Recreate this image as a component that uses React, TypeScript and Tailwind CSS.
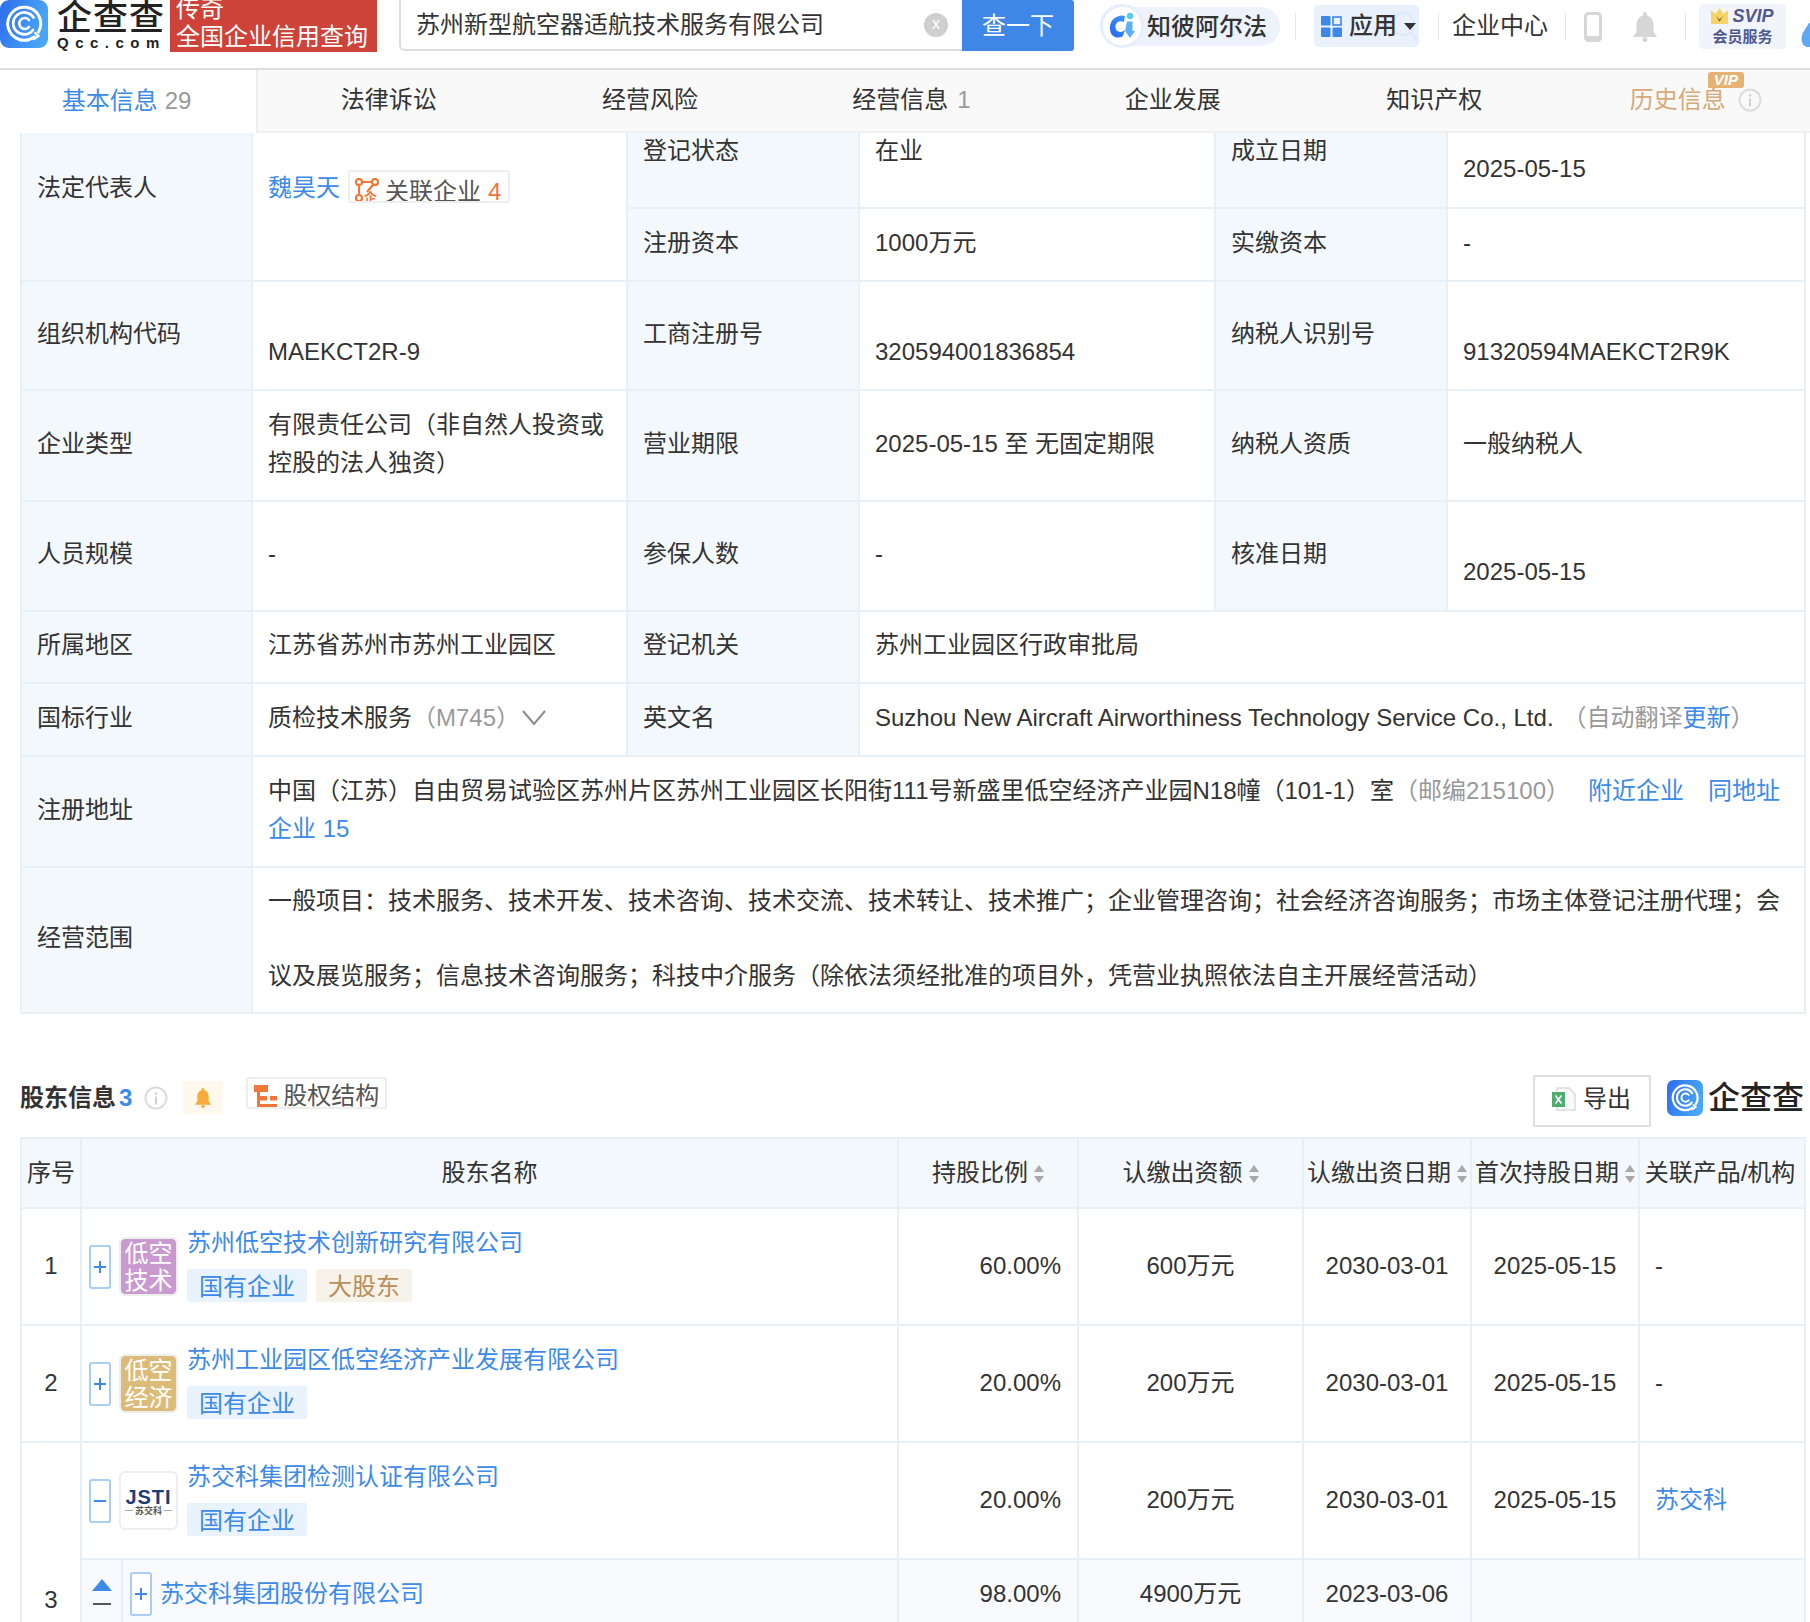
import React from "react";

const FONT = "font-['Liberation_Sans','Noto_Sans_CJK_SC',sans-serif]";
const BLUE = "text-[#3d8ae8]";

function QccIcon({ size, id }: { size: number; id: string }) {
  return (
    <svg width={size} height={size} viewBox="0 0 48 48" className="shrink-0 block">
      <defs>
        <linearGradient id={id} x1="0" y1="0" x2="1" y2="0.3">
          <stop offset="0" stopColor="#2e6cec" />
          <stop offset="1" stopColor="#48a6f6" />
        </linearGradient>
      </defs>
      <rect x="0" y="0" width="48" height="48" rx="9" fill={`url(#${id})`} />
      <path d="M34 37 A16.5 16.5 0 1 1 38.5 32" fill="none" stroke="#fff" strokeWidth="3" strokeLinecap="round" />
      <path d="M33 39.5 L38.5 36 L34.5 32.5" fill="none" stroke="#fff" strokeWidth="2.6" strokeLinejoin="round" />
      <path d="M33 30 A11 11 0 1 1 33.5 17.5" fill="none" stroke="#fff" strokeWidth="2.8" strokeLinecap="round" />
      <path d="M29 27 A5.5 5.5 0 1 1 29 20" fill="none" stroke="#fff" strokeWidth="2.6" strokeLinecap="round" />
    </svg>
  );
}

function Info({ cls }: { cls: string }) {
  return (
    <svg width="24" height="24" viewBox="0 0 24 24" className={cls}>
      <circle cx="12" cy="12" r="10.5" fill="none" stroke="#dcdcdc" strokeWidth="2" />
      <circle cx="12" cy="7.5" r="1.3" fill="#d0d0d0" />
      <rect x="11" y="10.5" width="2" height="8" fill="#d0d0d0" />
    </svg>
  );
}

function Sort() {
  return (
    <svg width="10" height="18" viewBox="0 0 10 18" className="inline-block ml-[6px] align-[-2px]">
      <path d="M5 0 L10 7 H0 Z M5 18 L0 11 H10 Z" fill="#a9a9a9" />
    </svg>
  );
}

function Toggle({ minus }: { minus?: boolean }) {
  return (
    <span className="w-[22px] h-[44px] shrink-0 rounded-[3px] border-2 border-[#a9cdf5] bg-white flex items-center justify-center">
      <svg width="12" height="12" viewBox="0 0 12 12">
        {!minus && <rect x="5" y="0" width="2" height="12" fill="#3d8ae8" />}
        <rect x="0" y="5" width="12" height="2" fill="#3d8ae8" />
      </svg>
    </span>
  );
}

function Tag({ gold, children }: { gold?: boolean; children: React.ReactNode }) {
  return (
    <span
      className={`inline-flex items-center h-[33px] px-[12px] pt-[2px] rounded-[2px] text-[24px] ${
        gold ? "bg-[#f7f2ea] text-[#b78f58]" : "bg-[#e9f3fd] text-[#3d8ae8]"
      }`}
    >
      {children}
    </span>
  );
}

function Logo({ a, b, bg }: { a: string; b: string; bg: string }) {
  return (
    <span className="w-[59px] h-[59px] shrink-0 rounded-[6px] border-2 border-[#eeeeee] overflow-hidden bg-white">
      <span className={`flex flex-col items-center justify-center w-full h-full rounded-[4px] text-white text-[24px] leading-[27px] ${bg}`}>
        <span>{a}</span>
        <span>{b}</span>
      </span>
    </span>
  );
}

function JstiLogo() {
  return (
    <span className="w-[59px] h-[59px] shrink-0 rounded-[6px] border-2 border-[#eeeeee] bg-white flex flex-col items-center justify-center pt-[2px]">
      <span className="text-[20px] leading-[18px] font-black text-[#1d3c78] tracking-[1px] font-['Liberation_Sans',sans-serif]">JSTI</span>
      <span className="flex items-center gap-[2px] text-[9px] leading-[10px] font-bold text-[#555]">
        <span className="w-[8px] h-px bg-[#aaa]" />苏交科<span className="w-[8px] h-px bg-[#aaa]" />
      </span>
    </span>
  );
}

const TD = "border-2 border-[#e8f0f7] align-middle";
const LB = `${TD} bg-[#f3f8fc] px-[15px] pb-[4px] font-normal text-left`;
const VL = `${TD} bg-white px-[15px] pb-[4px]`;
const LOW = "pt-[36px]";
const CELL = `${TD} pb-[2px]`;

function Shareholder({
  toggleMinus,
  logo,
  name,
  tags,
}: {
  toggleMinus?: boolean;
  logo: React.ReactNode;
  name: string;
  tags: React.ReactNode;
}) {
  return (
    <div className="flex items-center pl-[7px]">
      <Toggle minus={toggleMinus} />
      <span className="ml-[8px] mr-[9px] flex">{logo}</span>
      <div className="flex flex-col gap-[8px] -mt-[6px]">
        <a className={`${BLUE} leading-[36px]`}>{name}</a>
        <div className="flex gap-[9px]">{tags}</div>
      </div>
    </div>
  );
}

export default function App() {
  return (
    <div className={`relative w-[1810px] h-[1622px] overflow-hidden bg-white text-[#333333] text-[24px] ${FONT}`}>
      {/* top bar */}
      <header className="flex items-start h-[68px] whitespace-nowrap [&>*]:shrink-0">
        <QccIcon size={48} id="q1" />
        <div className="w-[122px] pl-[9px] flex flex-col">
          <span className="text-[35px] leading-[36px] tracking-[1px] text-[#222] font-medium">企查查</span>
          <span className="text-[15px] leading-[14px] tracking-[6.5px] font-semibold text-[#222]">Qcc.com</span>
        </div>
        <div className="w-[207px] h-[52px] overflow-hidden bg-[#cd4239] text-white pl-[6px] flex flex-col justify-end leading-[28px]">
          <span className="shrink-0">传奇</span>
          <span className="shrink-0 mb-[1px]">全国企业信用查询</span>
        </div>
        <div className="ml-[22px] w-[563px] h-[51px] border-2 border-t-0 border-r-0 border-[#dddddd] rounded-bl-[6px] flex items-center pl-[15px] pr-[14px] justify-between">
          <span>苏州新型航空器适航技术服务有限公司</span>
          <span className="w-[24px] h-[24px] rounded-full bg-[#cfcfcf] text-white text-[16px] leading-[22px] text-center">x</span>
        </div>
        <div className="w-[112px] h-[51px] bg-[#3f87e6] text-white rounded-r-[3px] flex items-center justify-center">查一下</div>
        <div className="ml-[26px] mt-[7px] w-[180px] h-[39px] rounded-full bg-[#edf2fc] relative flex items-center pl-[47px] font-medium">
          <span className="absolute left-0 -top-[3px] w-[44px] h-[44px] rounded-full bg-white border-[3px] border-[#e6eefb] flex items-center justify-center">
            <svg width="30" height="30" viewBox="0 0 30 30">
              <defs>
                <linearGradient id="ci" x1="0" y1="1" x2="1" y2="0">
                  <stop offset="0" stopColor="#2b63ee" />
                  <stop offset="1" stopColor="#3b9af5" />
                </linearGradient>
              </defs>
              <path d="M18 5 A12 12 0 0 0 3 18 C3 25 10 29 16 25 L18 19 C13 23 8.5 20 8.5 16 C8.5 11 13 9 17 11 Z" fill="url(#ci)" />
              <circle cx="23" cy="5" r="3.2" fill="#55cdf2" />
              <path d="M20 10.5 H25.5 V20 L28 20 L23 27 L18 20 Z" fill="#5db0f5" />
            </svg>
          </span>
          知彼阿尔法
        </div>
        <span className="ml-[15px] mt-[13px] w-px h-[27px] bg-[#e6e6e6]" />
        <div className="ml-[18px] mt-[5px] w-[105px] h-[42px] rounded-[4px] bg-[#e9f1fd] relative overflow-hidden flex items-center pl-[7px] font-medium">
          <svg width="28" height="32" viewBox="0 0 28 32" className="absolute left-[76px] top-[6px]">
            <circle cx="13" cy="13" r="11" fill="none" stroke="#dfeafb" strokeWidth="2.5" />
            <path d="M21 22 L27 30" stroke="#dfeafb" strokeWidth="3" />
          </svg>
          <svg width="21" height="21" viewBox="0 0 21 21" className="mr-[7px] relative">
            <rect x="0" y="0" width="9.5" height="9.5" rx="1" fill="#3f87e6" />
            <rect x="12" y="1" width="8" height="8" fill="none" stroke="#3f87e6" strokeWidth="1.6" />
            <rect x="0" y="11.5" width="9.5" height="9.5" rx="1" fill="#3f87e6" />
            <rect x="11.5" y="11.5" width="9.5" height="9.5" rx="1" fill="#3f87e6" />
          </svg>
          <span className="relative">应用</span>
          <svg width="12" height="7" viewBox="0 0 12 7" className="ml-[7px] relative">
            <path d="M0 0 H12 L6 7 Z" fill="#333" />
          </svg>
        </div>
        <span className="ml-[19px] mt-[13px] w-px h-[27px] bg-[#e6e6e6]" />
        <span className="ml-[13px] mt-[7px] leading-[38px]">企业中心</span>
        <span className="ml-[17px] mt-[13px] w-px h-[27px] bg-[#e6e6e6]" />
        <svg width="18" height="30" viewBox="0 0 18 30" className="ml-[18px] mt-[12px]">
          <rect x="1.5" y="1.5" width="15" height="27" rx="3" fill="none" stroke="#d6d6d6" strokeWidth="3" />
          <rect x="2" y="24" width="14" height="4" fill="#d6d6d6" />
        </svg>
        <svg width="24" height="30" viewBox="0 0 24 30" className="ml-[31px] mt-[12px]">
          <path d="M12 0 a2 2 0 0 1 2 2 v1.5 C19 5 20.5 9 20.5 14 V20 L24 25 H0 L3.5 20 V14 C3.5 9 5 5 10 3.5 V2 a2 2 0 0 1 2 -2 Z" fill="#d6d6d6" />
          <circle cx="12" cy="27.5" r="2.5" fill="#d6d6d6" />
        </svg>
        <span className="ml-[28px] mt-[13px] w-px h-[27px] bg-[#e6e6e6]" />
        <div className="ml-[13px] mt-[4px] w-[87px] h-[45px] rounded-[4px] bg-[#f2f4fc] text-[#50598f] flex flex-col items-center font-bold">
          <span className="flex items-center gap-[4px] h-[24px] text-[18px] italic font-['Liberation_Sans',sans-serif] font-black">
            <svg width="17" height="16" viewBox="0 0 15 14">
              <path d="M0 2 L4 5 L7.5 0 L11 5 L15 2 V14 H0 Z" fill="#f6d568" />
              <path d="M4.5 7 L7.5 10 L10.5 7 L7.5 12 Z" fill="#7a5b1f" />
            </svg>
            SVIP
          </span>
          <span className="text-[15px] leading-[18px]">会员服务</span>
        </div>
        <svg width="10" height="24" viewBox="0 0 10 24" className="ml-[15px] mt-[23px]">
          <path d="M8 0 L10 0 V24 H6 C0 22 -1 14 3 8 Z" fill="#5fa8f6" />
        </svg>
      </header>
      <div className="h-[2px] bg-[#dedede]" />

      {/* tabs */}
      <nav className="flex h-[63px] pb-0 bg-[#f9f9f9] border-b-2 border-[#f0f0f0] whitespace-nowrap [&>*]:pb-[2px]">
        <div className="w-[258px] shrink-0 bg-white border-r-2 border-[#eeeeee] -mb-[2px] pr-[3px] flex items-center justify-center">
          <span className={BLUE}>基本信息</span>
          <span className="ml-[7px] text-[#999]">29</span>
        </div>
        <div className="w-[261.4px] shrink-0 flex items-center justify-center">法律诉讼</div>
        <div className="w-[261.4px] shrink-0 flex items-center justify-center">经营风险</div>
        <div className="w-[261.4px] shrink-0 flex items-center justify-center">
          经营信息<span className="ml-[9px] text-[#999]">1</span>
        </div>
        <div className="w-[261.4px] shrink-0 flex items-center justify-center">企业发展</div>
        <div className="w-[261.4px] shrink-0 flex items-center justify-center">知识产权</div>
        <div className="w-[261.4px] shrink-0 flex items-center justify-center relative text-[#d7a978]">
          历史信息
          <Info cls="ml-[12px]" />
          <span className="absolute left-[143px] top-[2px] w-[36px] h-[16px] rounded-[3px] rounded-bl-none bg-[#e6b274] text-white text-[15px] leading-[16px] font-black italic text-center font-['Liberation_Sans',sans-serif]">VIP</span>
        </div>
      </nav>

      {/* company info */}
      <section className="h-[882px] overflow-hidden pl-[20px]">
        <table className="-mt-[36px] w-[1784px] table-fixed border-collapse leading-[38px]">
          <colgroup>
            <col className="w-[231px]" />
            <col className="w-[375px]" />
            <col className="w-[232px]" />
            <col className="w-[356px]" />
            <col className="w-[232px]" />
            <col className="w-[358px]" />
          </colgroup>
          <tbody>
            <tr className="h-[110px]">
              <th rowSpan={2} className={LB}>法定代表人</th>
              <td rowSpan={2} className={VL}>
                <div className="flex items-start">
                  <a className={BLUE}>魏昊天</a>
                  <span className="ml-[8px] mt-[1px] h-[33px] overflow-hidden border-2 border-[#eeeeee] rounded-[3px] flex pl-[5px] pr-[7px] leading-[40px] text-[#555555]">
                    <svg width="24" height="30" viewBox="0 0 24 30" className="mr-[6px] mt-[6px] shrink-0">
                      <g fill="none" stroke="#f0763a" strokeWidth="2.2">
                        <circle cx="4" cy="4" r="3" />
                        <circle cx="20" cy="4" r="3" />
                        <circle cx="4" cy="20" r="3" />
                        <path d="M7 4 H17 M4 7 V17 M18 7 L12 14" />
                      </g>
                      <text x="9" y="24" fontSize="13" fill="#f0763a" fontWeight="700">企</text>
                    </svg>
                    关联企业<span className="ml-[7px] text-[#f0763a]">4</span>
                  </span>
                </div>
              </td>
              <th className={LB}>登记状态</th>
              <td className={VL}>在业</td>
              <th className={LB}>成立日期</th>
              <td className={`${VL} ${LOW}`}>2025-05-15</td>
            </tr>
            <tr className="h-[73px]">
              <th className={LB}>注册资本</th>
              <td className={VL}>1000万元</td>
              <th className={LB}>实缴资本</th>
              <td className={VL}>-</td>
            </tr>
            <tr className="h-[109px]">
              <th className={LB}>组织机构代码</th>
              <td className={`${VL} ${LOW}`}>MAEKCT2R-9</td>
              <th className={LB}>工商注册号</th>
              <td className={`${VL} ${LOW}`}>320594001836854</td>
              <th className={LB}>纳税人识别号</th>
              <td className={`${VL} ${LOW}`}>91320594MAEKCT2R9K</td>
            </tr>
            <tr className="h-[111px]">
              <th className={LB}>企业类型</th>
              <td className={VL}>有限责任公司（非自然人投资或控股的法人独资）</td>
              <th className={LB}>营业期限</th>
              <td className={VL}>2025-05-15 至 无固定期限</td>
              <th className={LB}>纳税人资质</th>
              <td className={VL}>一般纳税人</td>
            </tr>
            <tr className="h-[110px]">
              <th className={LB}>人员规模</th>
              <td className={VL}>-</td>
              <th className={LB}>参保人数</th>
              <td className={VL}>-</td>
              <th className={LB}>核准日期</th>
              <td className={`${VL} ${LOW}`}>2025-05-15</td>
            </tr>
            <tr className="h-[72px]">
              <th className={LB}>所属地区</th>
              <td className={VL}>江苏省苏州市苏州工业园区</td>
              <th className={LB}>登记机关</th>
              <td colSpan={3} className={VL}>苏州工业园区行政审批局</td>
            </tr>
            <tr className="h-[73px]">
              <th className={LB}>国标行业</th>
              <td className={VL}>
                <div className="flex items-center whitespace-nowrap">
                  质检技术服务<span className="text-[#999999] -mr-[2px]">（M745）</span>
                  <svg width="24" height="16" viewBox="0 0 24 16" className="ml-[4px]">
                    <path d="M1 1 L12 14 L23 1" fill="none" stroke="#8c8c8c" strokeWidth="2" />
                  </svg>
                </div>
              </td>
              <th className={LB}>英文名</th>
              <td colSpan={3} className={VL}>
                Suzhou New Aircraft Airworthiness Technology Service Co., Ltd.
                <span className="ml-[9px] text-[#999999]">（自动翻译<a className={BLUE}>更新</a>）</span>
              </td>
            </tr>
            <tr className="h-[111px]">
              <th className={LB}>注册地址</th>
              <td colSpan={5} className={VL}>
                中国（江苏）自由贸易试验区苏州片区苏州工业园区长阳街111号新盛里低空经济产业园N18幢（101-1）室<span className="text-[#999999]">（邮编215100）</span><a className={`${BLUE} ml-[18px]`}>附近企业</a>
                <a className={`${BLUE} ml-[24px]`}>同地址企业 15</a>
              </td>
            </tr>
            <tr className="h-[146px]">
              <th className={LB}>经营范围</th>
              <td colSpan={5} className={`${TD} bg-white px-[15px]`}>
                <div className="leading-[75px] -mt-[6px] -mb-[2px]">
                  一般项目：技术服务、技术开发、技术咨询、技术交流、技术转让、技术推广；企业管理咨询；社会经济咨询服务；市场主体登记注册代理；会议及展览服务；信息技术咨询服务；科技中介服务（除依法须经批准的项目外，凭营业执照依法自主开展经营活动）
                </div>
              </td>
            </tr>
          </tbody>
        </table>
      </section>

      {/* shareholders heading */}
      <div className="h-[122px] flex items-start pl-[20px] pr-[6px]">
        <span className="mt-[64px] leading-[38px] font-bold">
          股东信息<span className={`${BLUE} ml-[3px]`}>3</span>
        </span>
        <Info cls="ml-[12px] mt-[71px]" />
        <span className="ml-[15px] mt-[66px] w-[40px] h-[33px] bg-[#fff8ec] flex items-center justify-center">
          <svg width="16" height="20" viewBox="0 0 24 30">
            <path d="M12 0 a2 2 0 0 1 2 2 v1.5 C19 5 20.5 9 20.5 14 V20 L24 25 H0 L3.5 20 V14 C3.5 9 5 5 10 3.5 V2 a2 2 0 0 1 2 -2 Z" fill="#f6ab3a" />
            <circle cx="12" cy="27.5" r="2.5" fill="#f6ab3a" />
          </svg>
        </span>
        <span className="ml-[23px] mt-[62px] w-[141px] h-[32px] border-2 border-[#eeeeee] rounded-[3px] flex items-start overflow-hidden pl-[6px] text-[#555555] leading-[34px]">
          <svg width="24" height="24" viewBox="0 0 24 24" className="mt-[6px] mr-[5px] shrink-0">
            <rect x="0" y="0" width="14" height="7" fill="#f0763a" />
            <rect x="3" y="7" width="3" height="17" fill="#f0763a" />
            <rect x="6" y="11" width="17" height="4.5" fill="#f0763a" />
            <rect x="6" y="19" width="17" height="5" fill="#f0763a" />
            <rect x="13" y="11" width="3" height="5" fill="#fff" />
          </svg>
          股权结构
        </span>
        <span className="ml-auto mt-[60px] w-[118px] h-[52px] border-2 border-[#dddddd] rounded-[2px] flex items-center pl-[17px] pb-[4px]">
          <svg width="24" height="24" viewBox="0 0 24 24" className="mr-[7px] shrink-0">
            <path d="M5 1 H17 L23 7 V23 H5 Z" fill="#fafafa" stroke="#dcdcdc" strokeWidth="1.5" />
            <rect x="0" y="5" width="13" height="15" fill="#4fae6e" />
            <path d="M3.5 8.5 L9.5 16.5 M9.5 8.5 L3.5 16.5" stroke="#fff" strokeWidth="1.6" />
          </svg>
          导出
        </span>
        <span className="ml-[16px] mt-[65px] flex items-center">
          <QccIcon size={36} id="q2" />
          <span className="ml-[5px] text-[32px] leading-[36px] text-[#222] font-medium whitespace-nowrap w-[96px]">企查查</span>
        </span>
      </div>

      {/* shareholders table */}
      <div className="pl-[20px]">
        <table className="w-[1784px] table-fixed border-collapse text-center leading-[36px]">
          <colgroup>
            <col className="w-[60px]" />
            <col className="w-[41px]" />
            <col className="w-[776px]" />
            <col className="w-[180px]" />
            <col className="w-[225px]" />
            <col className="w-[168px]" />
            <col className="w-[168px]" />
            <col className="w-[166px]" />
          </colgroup>
          <thead>
            <tr className="h-[70px] bg-[#f3f8fc]">
              <th className={`${TD} font-normal`}>序号</th>
              <th colSpan={2} className={`${TD} font-normal`}>股东名称</th>
              <th className={`${TD} font-normal`}>持股比例<Sort /></th>
              <th className={`${TD} font-normal`}>认缴出资额<Sort /></th>
              <th className={`${TD} font-normal whitespace-nowrap`}>认缴出资日期<Sort /></th>
              <th className={`${TD} font-normal whitespace-nowrap`}>首次持股日期<Sort /></th>
              <th className={`${TD} font-normal whitespace-nowrap pr-[4px]`}>关联产品/机构</th>
            </tr>
          </thead>
          <tbody>
            <tr className="h-[117px]">
              <td className={CELL}>1</td>
              <td colSpan={2} className={`${TD} text-left`}>
                <Shareholder
                  logo={<Logo a="低空" b="技术" bg="bg-[#c89ad0]" />}
                  name="苏州低空技术创新研究有限公司"
                  tags={<><Tag>国有企业</Tag><Tag gold>大股东</Tag></>}
                />
              </td>
              <td className={`${CELL} text-right pr-[16px]`}>60.00%</td>
              <td className={CELL}>600万元</td>
              <td className={CELL}>2030-03-01</td>
              <td className={CELL}>2025-05-15</td>
              <td className={`${CELL} text-left pl-[15px]`}>-</td>
            </tr>
            <tr className="h-[117px]">
              <td className={CELL}>2</td>
              <td colSpan={2} className={`${TD} text-left`}>
                <Shareholder
                  logo={<Logo a="低空" b="经济" bg="bg-[#dcbb78]" />}
                  name="苏州工业园区低空经济产业发展有限公司"
                  tags={<Tag>国有企业</Tag>}
                />
              </td>
              <td className={`${CELL} text-right pr-[16px]`}>20.00%</td>
              <td className={CELL}>200万元</td>
              <td className={CELL}>2030-03-01</td>
              <td className={CELL}>2025-05-15</td>
              <td className={`${CELL} text-left pl-[15px]`}>-</td>
            </tr>
            <tr className="h-[117px]">
              <td rowSpan={2} className={`${TD} pt-[128px]`}>3</td>
              <td colSpan={2} className={`${TD} text-left`}>
                <Shareholder
                  toggleMinus
                  logo={<JstiLogo />}
                  name="苏交科集团检测认证有限公司"
                  tags={<Tag>国有企业</Tag>}
                />
              </td>
              <td className={`${CELL} text-right pr-[16px]`}>20.00%</td>
              <td className={CELL}>200万元</td>
              <td className={CELL}>2030-03-01</td>
              <td className={CELL}>2025-05-15</td>
              <td className={`${CELL} text-left pl-[15px]`}><a className={BLUE}>苏交科</a></td>
            </tr>
            <tr className="h-[70px] bg-[#f8fafe]">
              <td className={TD}>
                <div className="flex flex-col items-center gap-[12px] pb-[4px]">
                  <svg width="20" height="12" viewBox="0 0 20 12"><path d="M10 0 L20 12 H0 Z" fill="#3d8ae8" /></svg>
                  <span className="w-[18px] h-[2px] bg-[#555555]" />
                </div>
              </td>
              <td className={`${TD} text-left`}>
                <div className="flex items-center pl-[7px]">
                  <Toggle />
                  <a className={`${BLUE} ml-[8px]`}>苏交科集团股份有限公司</a>
                </div>
              </td>
              <td className={`${TD} text-right pr-[16px]`}>98.00%</td>
              <td className={TD}>4900万元</td>
              <td className={TD}>2023-03-06</td>
              <td colSpan={2} className={TD} />
            </tr>
          </tbody>
        </table>
      </div>
    </div>
  );
}
